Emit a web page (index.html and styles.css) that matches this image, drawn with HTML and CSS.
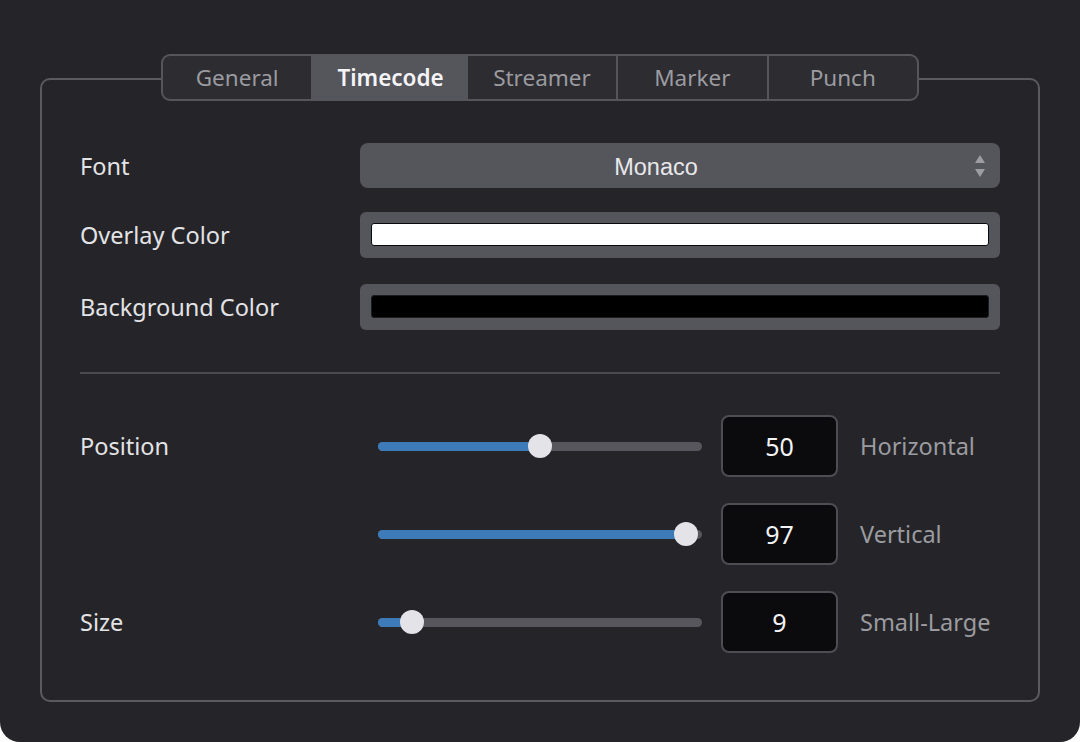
FILE: index.html
```html
<!DOCTYPE html>
<html lang="en">

<head>
  <meta charset="UTF-8" />
  <title>Timecode Settings</title>
  <link rel="stylesheet" href="styles.css">
</head>

<body>
  <div class="window">
    <div class="tabs">
      <div class="tab">General</div>
      <div class="tab active">Timecode</div>
      <div class="tab">Streamer</div>
      <div class="tab">Marker</div>
      <div class="tab">Punch</div>
    </div>

    <div class="group">
      <div class="field">
        <div class="label">Font</div>
        <div class="select">
          <span>Monaco</span>
          <svg class="arrows" width="12" height="26" viewBox="0 0 12 26">
            <path d="M6 2 L11 10 L1 10 Z" fill="#9c9ca2" />
            <path d="M6 24 L11 16 L1 16 Z" fill="#9c9ca2" />
          </svg>
        </div>
      </div>

      <div class="field">
        <div class="label">Overlay Color</div>
        <div class="well"><div class="swatch white"></div></div>
      </div>

      <div class="field">
        <div class="label">Background Color</div>
        <div class="well"><div class="swatch black"></div></div>
      </div>

      <div class="separator"></div>

      <div class="slider-row">
        <div class="label">Position</div>
        <div class="slider">
          <div class="track">
            <div class="fill" style="width: 162px"></div>
            <div class="knob" style="left: 162px"></div>
          </div>
        </div>
        <div class="value">50</div>
        <div class="hint">Horizontal</div>
      </div>

      <div class="slider-row">
        <div class="label"></div>
        <div class="slider">
          <div class="track">
            <div class="fill" style="width: 308px"></div>
            <div class="knob" style="left: 308px"></div>
          </div>
        </div>
        <div class="value">97</div>
        <div class="hint">Vertical</div>
      </div>

      <div class="slider-row">
        <div class="label">Size</div>
        <div class="slider">
          <div class="track">
            <div class="fill" style="width: 34px"></div>
            <div class="knob" style="left: 34px"></div>
          </div>
        </div>
        <div class="value">9</div>
        <div class="hint">Small-Large</div>
      </div>
    </div>
  </div>
</body>

</html>
```

FILE: styles.css
```css
body {
  margin: 0;
  background-color: #ffffff;
  font-family: "Noto Sans", sans-serif;
}

.window {
  height: 742px;
  box-sizing: border-box;
  background-color: #252529;
  border-radius: 0 0 20px 20px;
  padding: 54px 40px 0 40px;
}

.tabs {
  display: flex;
  width: 758px;
  height: 47px;
  margin: 0 auto -23px auto;
  box-sizing: border-box;
  border: 2px solid #55555b;
  border-radius: 9px;
  background-color: #2c2c31;
  overflow: hidden;
  position: relative;
}

.tab {
  flex: 1;
  display: flex;
  align-items: center;
  justify-content: center;
  color: #9b9ba0;
  font-size: 22.5px;
  border-left: 2px solid #55555b;
}

.tab:first-child {
  border-left: none;
}

.tab.active {
  background-color: #55555c;
  color: #f4f4f6;
  font-weight: 600;
  flex: 1.04;
}

.tab.active + .tab {
  border-left: none;
}

.group {
  height: 624px;
  box-sizing: border-box;
  border: 2px solid #5a5a60;
  border-radius: 10px;
  padding: 63px 38px 0 38px;
}

.field {
  display: grid;
  grid-template-columns: 280px 1fr;
  align-items: center;
  margin-bottom: 26px;
}

.field:first-child {
  margin-bottom: 24px;
}

.label {
  color: #e3e3e6;
  font-size: 23.5px;
}

.select {
  height: 45px;
  box-sizing: border-box;
  padding-right: 48px;
  background-color: #55555c;
  border-radius: 8px;
  display: flex;
  align-items: center;
  justify-content: center;
  position: relative;
  color: #e8e8ea;
  font-family: "Liberation Sans", sans-serif;
  font-size: 23.5px;
}

.select span {
  margin-top: 3px;
}

.arrows {
  position: absolute;
  right: 14px;
  top: 10px;
}

.well {
  height: 46px;
  box-sizing: border-box;
  background-color: #55555c;
  border-radius: 6px;
  padding: 11px 11px 12px 11px;
}

.swatch {
  height: 100%;
  box-sizing: border-box;
  border: 1px solid #0a0a0a;
  border-radius: 3px;
}

.swatch.white {
  background-color: #ffffff;
}

.swatch.black {
  background-color: #000000;
  border-color: #1c1c1f;
}

.separator {
  height: 2px;
  background-color: #4a4a50;
  margin: 42px 0 41px 0;
}

.slider-row {
  display: grid;
  grid-template-columns: 280px 361px 117px 1fr;
  align-items: center;
  height: 62px;
  margin-bottom: 26px;
}

.slider {
  padding: 0 19px 0 18px;
}

.track {
  height: 9px;
  border-radius: 5px;
  background-color: #56565c;
  position: relative;
}

.fill {
  height: 100%;
  border-radius: 5px;
  background-color: #3d7ab8;
}

.knob {
  position: absolute;
  top: -8px;
  width: 24px;
  height: 24px;
  margin-left: -12px;
  border-radius: 50%;
  background-color: #e3e3e8;
}

.value {
  height: 62px;
  box-sizing: border-box;
  border: 2px solid #4d4d53;
  border-radius: 8px;
  background-color: #0b0b0e;
  color: #f2f2f4;
  font-size: 25px;
  display: flex;
  align-items: center;
  justify-content: center;
}

.hint {
  padding-left: 22px;
  color: #9b9ba0;
  font-size: 23.5px;
}
```
